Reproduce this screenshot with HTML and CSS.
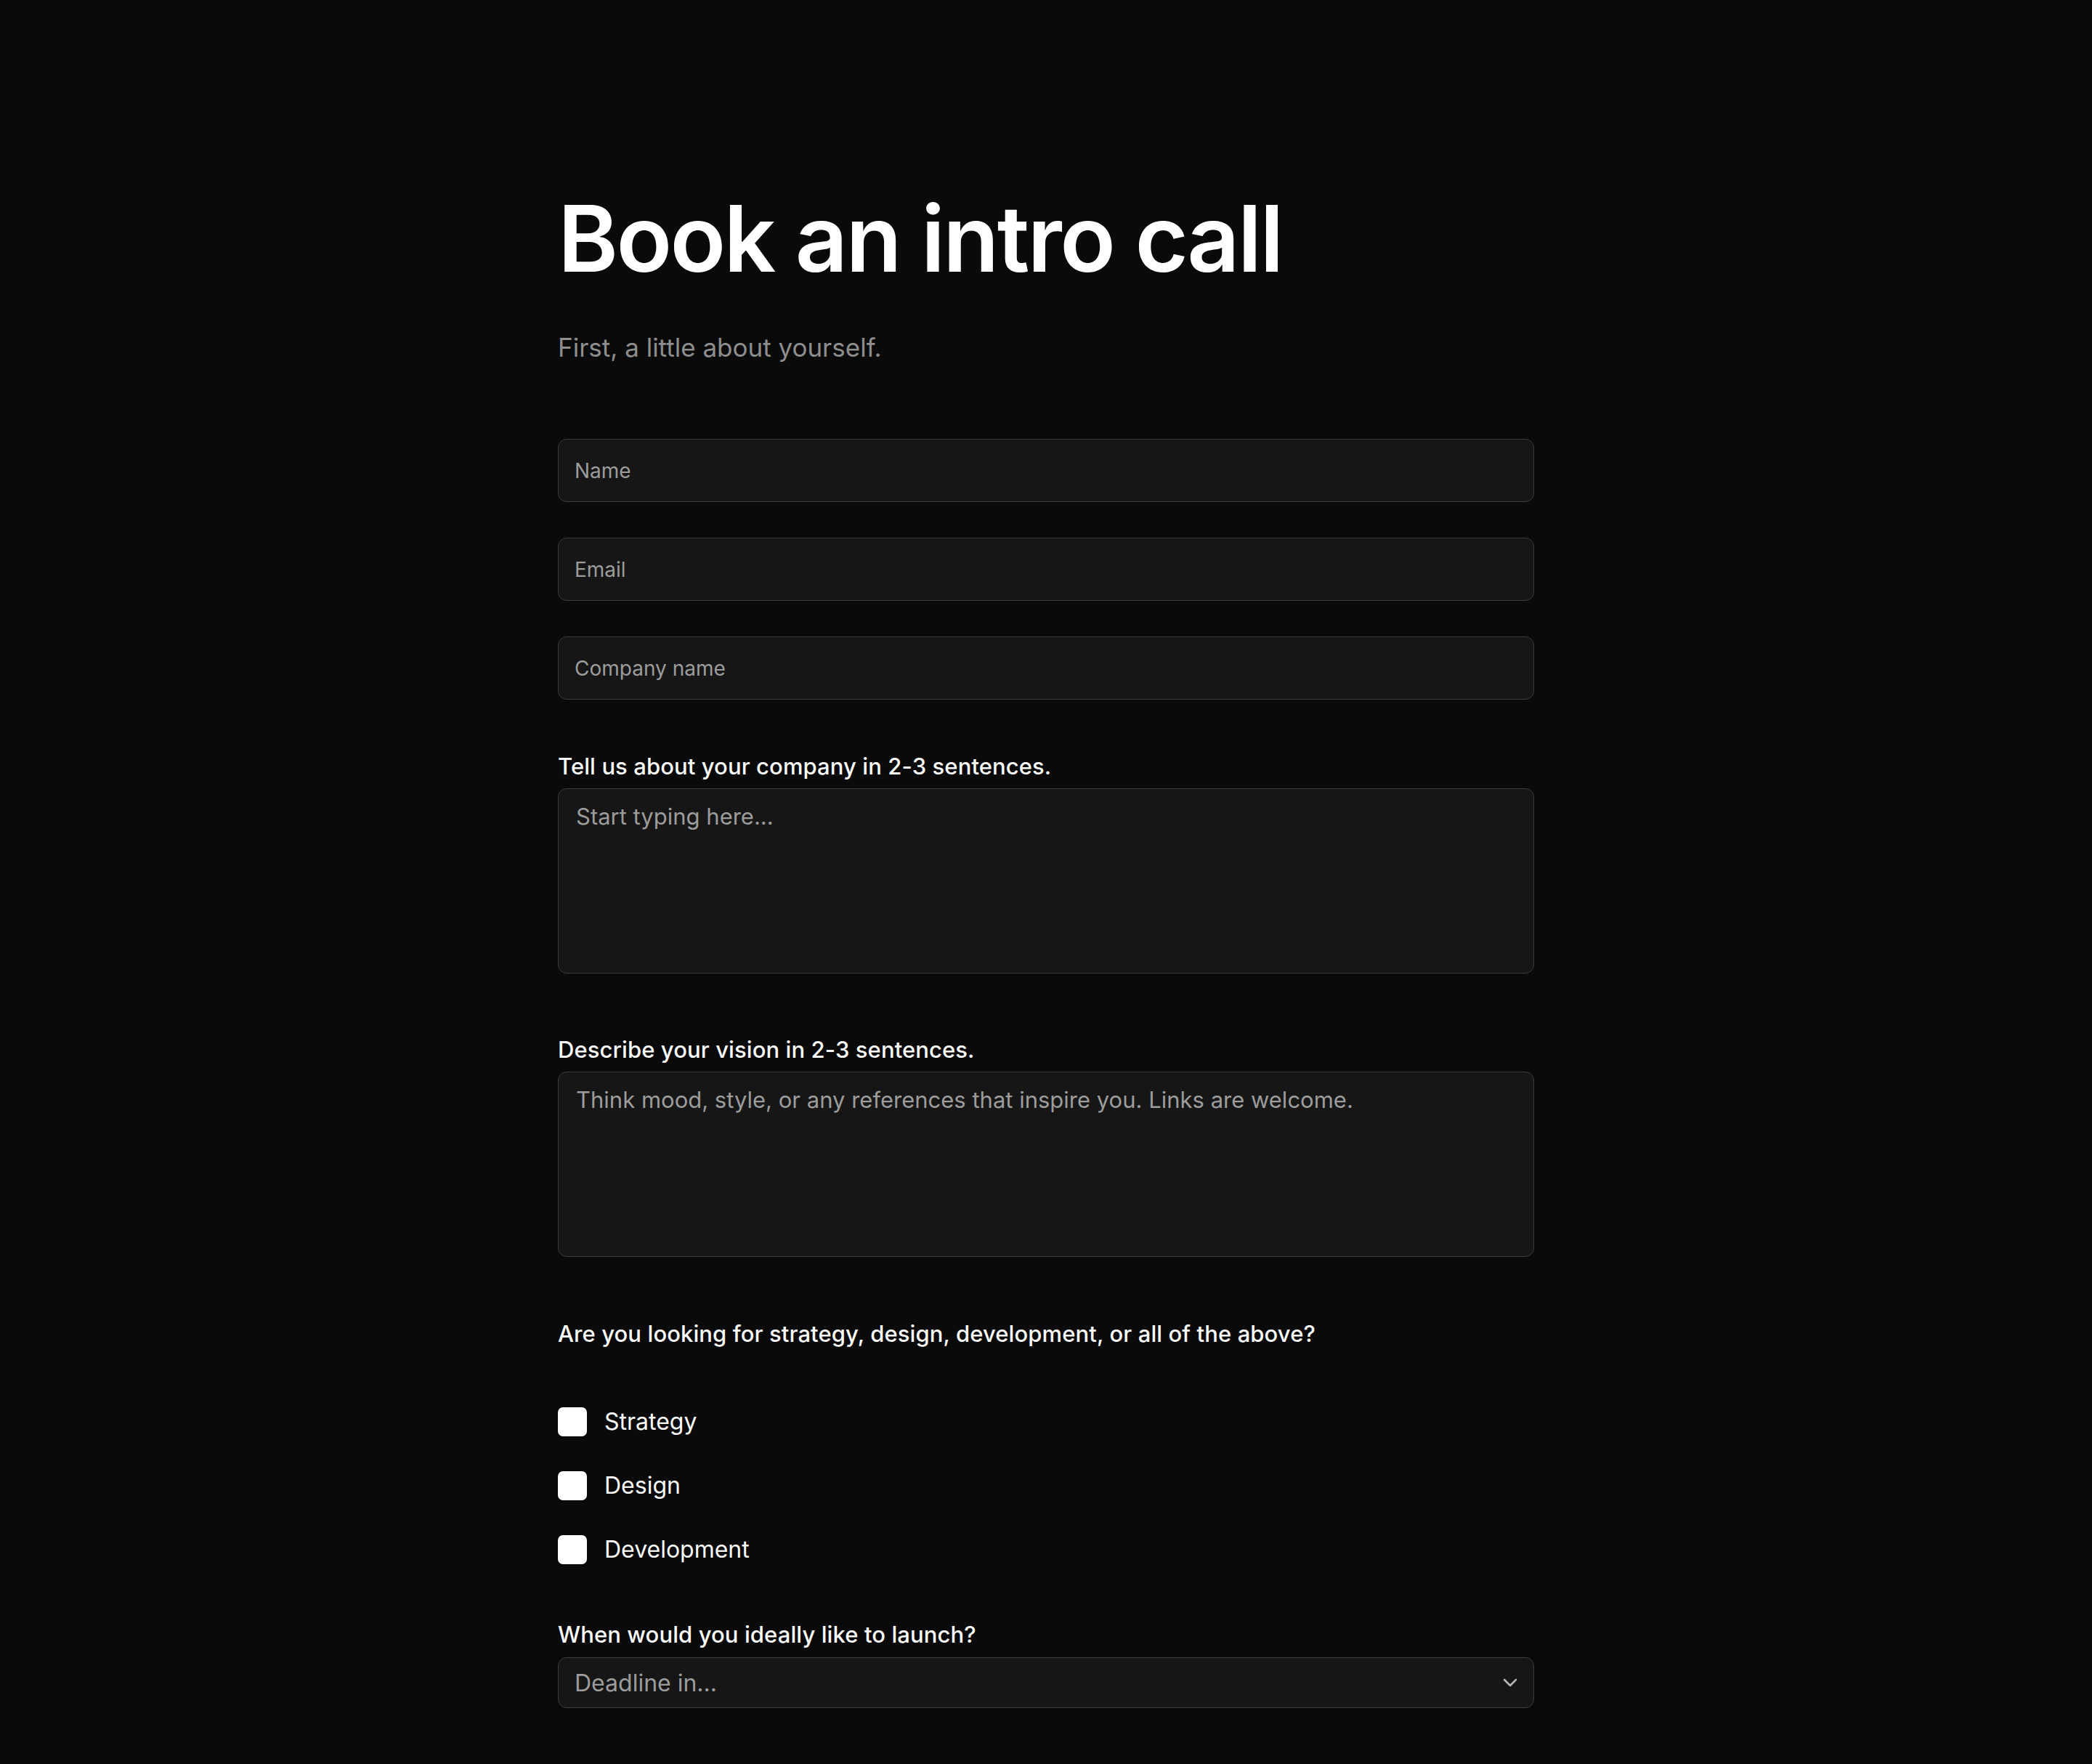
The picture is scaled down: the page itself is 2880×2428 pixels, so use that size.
FILE: index.html
```html
<!DOCTYPE html>
<html lang="en">
<head>
  <meta charset="UTF-8" />
  <title>Book an intro call</title>
  <link rel="stylesheet" href="styles.css">
</head>
<body>
  <div class="container">
    <h1 class="title">Book an intro call</h1>
    <p class="lead">First, a little about yourself.</p>

    <form class="intro-form" onsubmit="return false">
      <div class="basics">
        <input class="field" type="text" name="name" placeholder="Name" />
        <input class="field" type="email" name="email" placeholder="Email" />
        <input class="field" type="text" name="company" placeholder="Company name" />
      </div>

      <div class="group group-about">
        <label class="label" for="about">Tell us about your company in 2-3 sentences.</label>
        <textarea class="area" id="about" placeholder="Start typing here..."></textarea>
      </div>

      <div class="group group-vision">
        <label class="label" for="vision">Describe your vision in 2-3 sentences.</label>
        <textarea class="area" id="vision" placeholder="Think mood, style, or any references that inspire you. Links are welcome."></textarea>
      </div>

      <div class="group group-services">
        <p class="label">Are you looking for strategy, design, development, or all of the above?</p>
        <div class="checks">
          <label class="check"><input type="checkbox" name="services" value="strategy" /> <span>Strategy</span></label>
          <label class="check"><input type="checkbox" name="services" value="design" /> <span>Design</span></label>
          <label class="check"><input type="checkbox" name="services" value="development" /> <span>Development</span></label>
        </div>
      </div>

      <div class="group group-launch">
        <label class="label" for="launch">When would you ideally like to launch?</label>
        <div class="select-wrap">
          <select class="select" id="launch">
            <option value="" selected disabled>Deadline in...</option>
            <option>1 month</option>
            <option>2-3 months</option>
            <option>3-6 months</option>
            <option>6+ months</option>
          </select>
          <svg class="chevron" width="20" height="12" viewBox="0 0 20 12" fill="none">
            <path d="M2 2l8 8 8-8" stroke="#b5b5b5" stroke-width="2.6" stroke-linecap="round" stroke-linejoin="round"/>
          </svg>
        </div>
      </div>
    </form>
  </div>
</body>
</html>
```

FILE: styles.css
```css
body {
  margin: 0;
  background: #0a0a0a;
  color: #f5f5f5;
  font-family: Inter, "Noto Sans", Arial, sans-serif;
}

.container {
  max-width: 1344px;
  margin: 0 auto;
  padding: 265px 0 60px;
}

.title {
  margin: 0;
  font-size: 126px;
  line-height: 1;
  font-weight: 600;
  letter-spacing: -0.021em;
  color: #fff;
}

.lead {
  margin: 67px 0 0;
  font-size: 35px;
  line-height: 40px;
  color: #8e8e8e;
}

.intro-form {
  margin-top: 106px;
}

.basics {
  display: flex;
  flex-direction: column;
  gap: 49px;
}

.field,
.area,
.select {
  display: block;
  box-sizing: border-box;
  width: 100%;
  margin: 0;
  background: #161616;
  border: 1.5px solid #3c3c3c;
  border-radius: 12px;
  color: #f5f5f5;
  font-family: inherit;
  outline: none;
}

.field {
  height: 87px;
  padding: 0 22px;
  font-size: 28px;
}

.field::placeholder,
.area::placeholder {
  color: #9c9c9c;
}

.group {
  display: flex;
  flex-direction: column;
  gap: 11px;
}

.label {
  margin: 0;
  font-size: 31px;
  line-height: 38px;
  font-weight: 500;
  letter-spacing: 0.003em;
  color: #fafafa;
}

.group-about {
  margin-top: 73px;
}

.group-vision {
  margin-top: 86px;
}

.area {
  height: 255px;
  padding: 18px 24px;
  font-size: 31px;
  line-height: 40px;
  resize: none;
}

.group-services {
  margin-top: 87px;
  gap: 82px;
}

.checks {
  display: flex;
  flex-direction: column;
  gap: 48px;
}

.check {
  display: flex;
  align-items: center;
  gap: 24px;
  font-size: 32px;
  line-height: 40px;
  color: #fafafa;
  cursor: pointer;
}

.check input {
  appearance: none;
  -webkit-appearance: none;
  width: 40px;
  height: 40px;
  margin: 0;
  background: #fff;
  border-radius: 7px;
  flex-shrink: 0;
}

.check input:checked {
  background: #fff radial-gradient(circle, #0a0a0a 30%, transparent 32%);
}

.group-launch {
  margin-top: 78px;
  gap: 12px;
}

.select-wrap {
  position: relative;
}

.select {
  appearance: none;
  -webkit-appearance: none;
  height: 70px;
  padding: 0 60px 0 22px;
  font-size: 32px;
  color: #9c9c9c;
}

.chevron {
  position: absolute;
  right: 23px;
  top: 29px;
  pointer-events: none;
}
```
